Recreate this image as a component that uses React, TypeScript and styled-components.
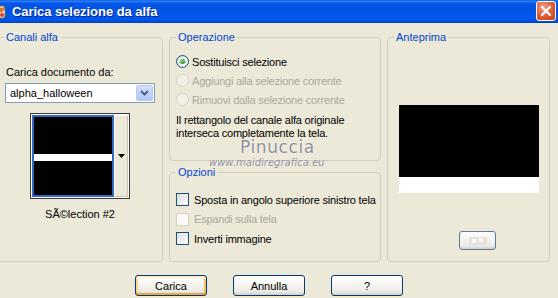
import styled, { createGlobalStyle } from "styled-components";

const GlobalStyle = createGlobalStyle`
  html, body {
    margin: 0;
    padding: 0;
    background: #ece9d8;
  }
  body {
    font-family: "Liberation Sans", Arial, sans-serif;
    font-size: 11px;
    color: #000;
  }
`;

const Window = styled.div`
  position: relative;
  width: 558px;
  height: 298px;
  overflow: hidden;
  background: #ece9d8;
  display: flex;
  flex-direction: column;
`;

const TitleBar = styled.div`
  height: 23px;
  flex: none;
  display: flex;
  align-items: center;
  background: linear-gradient(
    180deg,
    #0a5fd8 0%,
    #2f80f8 5%,
    #0656e6 14%,
    #0054e3 45%,
    #0058ec 80%,
    #0050e0 92%,
    #0040b8 100%
  );
`;

const TitleIcon = styled.svg`
  width: 16px;
  height: 16px;
  margin-left: -10px;
  margin-right: 6px;
  flex: none;
`;

const Title = styled.div`
  flex: 1;
  color: #fff;
  font-weight: bold;
  font-size: 13px;
  letter-spacing: -0.05px;
  text-shadow: 1px 1px 0 #0a1e8c;
`;

const CloseButton = styled.div`
  width: 20px;
  height: 20px;
  margin-right: 2px;
  align-self: flex-start;
  margin-top: 1px;
  box-sizing: border-box;
  border: 1px solid #fff;
  border-radius: 3px;
  background: radial-gradient(circle at 35% 30%, #f0a08a 0%, #e2623f 45%, #c83d12 100%);
  display: flex;
  align-items: center;
  justify-content: center;
`;

const Body = styled.div`
  flex: 1;
  display: flex;
  flex-direction: column;
  padding-top: 8px;
`;

const Panels = styled.div`
  display: flex;
  column-gap: 6px;
  margin-left: -3px;
  height: 231px;
`;

const Column = styled.div`
  display: flex;
  flex-direction: column;
  gap: 5px;
`;

const Group = styled.fieldset<{ $width: number; $height: number; $padTop: number }>`
  margin: 0;
  min-width: 0;
  width: ${({ $width }) => $width}px;
  height: ${({ $height }) => $height}px;
  box-sizing: border-box;
  border: 1px solid #d0d0bf;
  border-radius: 4px;
  padding: ${({ $padTop }) => $padTop}px 6px 0 6px;
  display: flex;
  flex-direction: column;
`;

const Legend = styled.legend`
  color: #0046d5;
  padding: 0 2px;
  font-size: 11px;
  line-height: 13px;
`;

const FieldLabel = styled.div`
  line-height: 13px;
  padding-left: 2px;
`;

const SelectBox = styled.div`
  margin-top: 4px;
  margin-left: 1px;
  width: 150px;
  height: 20px;
  box-sizing: border-box;
  border: 1px solid #7f9db9;
  background: #fff;
  padding: 1px;
  display: flex;
  align-items: center;
`;

const SelectText = styled.div`
  flex: 1;
  padding-left: 3px;
  line-height: 13px;
`;

const SelectArrow = styled.div`
  width: 17px;
  height: 16px;
  box-sizing: border-box;
  border: 1px solid #b6c9f2;
  border-radius: 2px;
  background: linear-gradient(180deg, #d6e2fd 0%, #c1d3fb 50%, #b2c7f5 100%);
  display: flex;
  align-items: center;
  justify-content: center;
`;

const Thumb = styled.div`
  margin-top: 10px;
  align-self: center;
  width: 100px;
  height: 86px;
  box-sizing: border-box;
  border: 1px solid #3a3a3a;
  background: #fff;
  padding: 1px;
  display: flex;
`;

const ThumbImage = styled.div`
  width: 82px;
  height: 82px;
  box-sizing: border-box;
  border: 2px solid #316ac5;
  background: #000;
  padding-top: 37px;
`;

const ThumbStripe = styled.div`
  height: 7px;
  background: #fff;
`;

const ThumbArrow = styled.div`
  flex: 1;
  box-sizing: border-box;
  border: 1px solid #fff;
  border-right-color: #c9c6b8;
  border-bottom-color: #c9c6b8;
  background: #ece9d8;
  display: flex;
  align-items: center;
  justify-content: center;
`;

const Caption = styled.div`
  margin-top: 9px;
  line-height: 13px;
  text-align: center;
`;

const OptionRow = styled.div<{ $height: number; $gap: number; $disabled?: boolean }>`
  height: ${({ $height }) => $height}px;
  display: flex;
  align-items: center;
  gap: ${({ $gap }) => $gap}px;
  color: ${({ $disabled }) => ($disabled ? "#aca899" : "#000")};
  letter-spacing: -0.2px;
  white-space: nowrap;
`;

const Radio = styled.span<{ $checked?: boolean; $disabled?: boolean }>`
  width: 13px;
  height: 13px;
  flex: none;
  box-sizing: border-box;
  border-radius: 50%;
  border: 1px solid ${({ $disabled }) => ($disabled ? "#d6d3c4" : "#1c5180")};
  background: ${({ $disabled }) =>
    $disabled ? "#f2f0e6" : "linear-gradient(135deg, #dcdcd7 0%, #ffffff 100%)"};
  display: flex;
  align-items: center;
  justify-content: center;

  &::after {
    content: "";
    display: ${({ $checked }) => ($checked ? "block" : "none")};
    width: 5px;
    height: 5px;
    border-radius: 50%;
    background: radial-gradient(circle at 35% 35%, #8ee28e 0%, #31a831 55%, #1a8a1a 100%);
  }
`;

const Checkbox = styled.span<{ $disabled?: boolean }>`
  width: 13px;
  height: 13px;
  flex: none;
  box-sizing: border-box;
  border: 1px solid ${({ $disabled }) => ($disabled ? "#d6d3c4" : "#1c5180")};
  background: ${({ $disabled }) =>
    $disabled ? "#fbfaf6" : "linear-gradient(135deg, #dcdcd7 0%, #ffffff 100%)"};
`;

const Note = styled.div`
  margin-top: 4.5px;
  line-height: 13px;
  letter-spacing: -0.2px;
`;

const Preview = styled.div`
  align-self: center;
  width: 140px;
  display: flex;
  flex-direction: column;
`;

const PreviewFill = styled.div<{ $tone: string; $height: number }>`
  height: ${({ $height }) => $height}px;
  background: ${({ $tone }) => $tone};
`;

const XPButton = styled.button<{ $default?: boolean; $width: number; $height: number }>`
  width: ${({ $width }) => $width}px;
  height: ${({ $height }) => $height}px;
  box-sizing: border-box;
  padding: 0;
  border: 1px solid #003c74;
  border-radius: 3px;
  font-family: "Liberation Sans", Arial, sans-serif;
  font-size: 11px;
  color: #000;
  background: linear-gradient(180deg, #ffffff 0%, #f7f7f3 35%, #ecebe6 80%, #d8d2c6 100%);
  box-shadow: ${({ $default }) =>
    $default
      ? "inset 0 2px 0 #ffefc9, inset 0 -2px 0 #eea63c, inset 2px 0 0 #fbd48c, inset -2px 0 0 #f6c267"
      : "inset 0 -1px 0 #d6d0c5"};
  display: flex;
  align-items: center;
  justify-content: center;
`;

const PreviewButton = styled(XPButton)`
  margin-top: 38px;
  margin-left: 18px;
  align-self: center;
  border-color: #5a7aa6;
`;

const ButtonRow = styled.div`
  margin-top: 13px;
  padding-left: 135px;
  display: flex;
  gap: 26px;
`;

// watermark stamped over the screenshot
const WatermarkName = styled.div`
  position: absolute;
  left: 240px;
  top: 141px;
  font-family: "DejaVu Sans", sans-serif;
  font-size: 17px;
  line-height: 13px;
  letter-spacing: 0.6px;
  color: #8f8f9c;
  text-shadow: 0 0 2px #ffffff, 0 0 1px #ffffff;
  pointer-events: none;
`;

const WatermarkSite = styled.div`
  position: absolute;
  left: 209px;
  top: 158px;
  font-family: "DejaVu Sans", sans-serif;
  font-style: italic;
  font-size: 10px;
  line-height: 10px;
  color: #8f8f9c;
  text-shadow: 0 0 1px #ffffff;
  pointer-events: none;
`;

const App = () => {
  return (
    <Window>
      <GlobalStyle />
      <TitleBar>
        <TitleIcon viewBox="0 0 16 16">
          <rect x="1" y="2" width="14" height="12" rx="2" fill="#f6f3ea" stroke="#8a6a3a" />
          <circle cx="11" cy="6" r="2.5" fill="#e8702a" />
          <circle cx="12" cy="11" r="2" fill="#d83a2a" />
          <rect x="13" y="3" width="2" height="3" fill="#7a8a9a" />
        </TitleIcon>
        <Title>Carica selezione da alfa</Title>
        <CloseButton>
          <svg width="12" height="12" viewBox="0 0 12 12">
            <path d="M2 2 L10 10 M10 2 L2 10" stroke="#fff" strokeWidth="2.2" strokeLinecap="round" />
          </svg>
        </CloseButton>
      </TitleBar>

      <Body>
        <Panels>
          <Group $width={166} $height={231} $padTop={22}>
            <Legend>Canali alfa</Legend>
            <FieldLabel>Carica documento da:</FieldLabel>
            <SelectBox>
              <SelectText>alpha_halloween</SelectText>
              <SelectArrow>
                <svg width="9" height="6" viewBox="0 0 9 6">
                  <path d="M1 1 L4.5 4.5 L8 1" fill="none" stroke="#4d6185" strokeWidth="2" />
                </svg>
              </SelectArrow>
            </SelectBox>
            <Thumb>
              <ThumbImage>
                <ThumbStripe />
              </ThumbImage>
              <ThumbArrow>
                <svg width="7" height="4" viewBox="0 0 7 4">
                  <path d="M0 0 H7 L3.5 4 Z" fill="#000" />
                </svg>
              </ThumbArrow>
            </Thumb>
            <Caption>SÃ©lection #2</Caption>
          </Group>

          <Column>
            <Group $width={212} $height={130} $padTop={8}>
              <Legend>Operazione</Legend>
              <OptionRow $height={19} $gap={3}>
                <Radio $checked />
                Sostituisci selezione
              </OptionRow>
              <OptionRow $height={19} $gap={3} $disabled>
                <Radio $disabled />
                Aggiungi alla selezione corrente
              </OptionRow>
              <OptionRow $height={19} $gap={3} $disabled>
                <Radio $disabled />
                Rimuovi dalla selezione corrente
              </OptionRow>
              <Note>
                Il rettangolo del canale alfa originale
                <br />
                interseca completamente la tela.
              </Note>
            </Group>

            <Group $width={212} $height={96} $padTop={11}>
              <Legend>Opzioni</Legend>
              <OptionRow $height={19.5} $gap={5}>
                <Checkbox />
                Sposta in angolo superiore sinistro tela
              </OptionRow>
              <OptionRow $height={19.5} $gap={5} $disabled>
                <Checkbox $disabled />
                Espandi sulla tela
              </OptionRow>
              <OptionRow $height={19.5} $gap={5}>
                <Checkbox />
                Inverti immagine
              </OptionRow>
            </Group>
          </Column>

          <Group $width={163} $height={231} $padTop={61}>
            <Legend>Anteprima</Legend>
            <Preview>
              <PreviewFill $tone="#000" $height={72} />
              <PreviewFill $tone="#fff" $height={16} />
            </Preview>
            <PreviewButton $width={37} $height={19}>
              <svg width="18" height="8" viewBox="0 0 18 8">
                <rect x="0" y="0" width="18" height="8" fill="#e4e3dc" />
                <rect x="3" y="2" width="4" height="4" fill="#fafaf7" />
                <rect x="10" y="1" width="4" height="4" fill="#fafaf7" />
              </svg>
            </PreviewButton>
          </Group>
        </Panels>

        <ButtonRow>
          <XPButton $default $width={72} $height={21}>Carica</XPButton>
          <XPButton $width={72} $height={21}>Annulla</XPButton>
          <XPButton $width={72} $height={21}>?</XPButton>
        </ButtonRow>
      </Body>

      <WatermarkName>Pinuccia</WatermarkName>
      <WatermarkSite>www.maidiregrafica.eu</WatermarkSite>
    </Window>
  );
};

export default App;
